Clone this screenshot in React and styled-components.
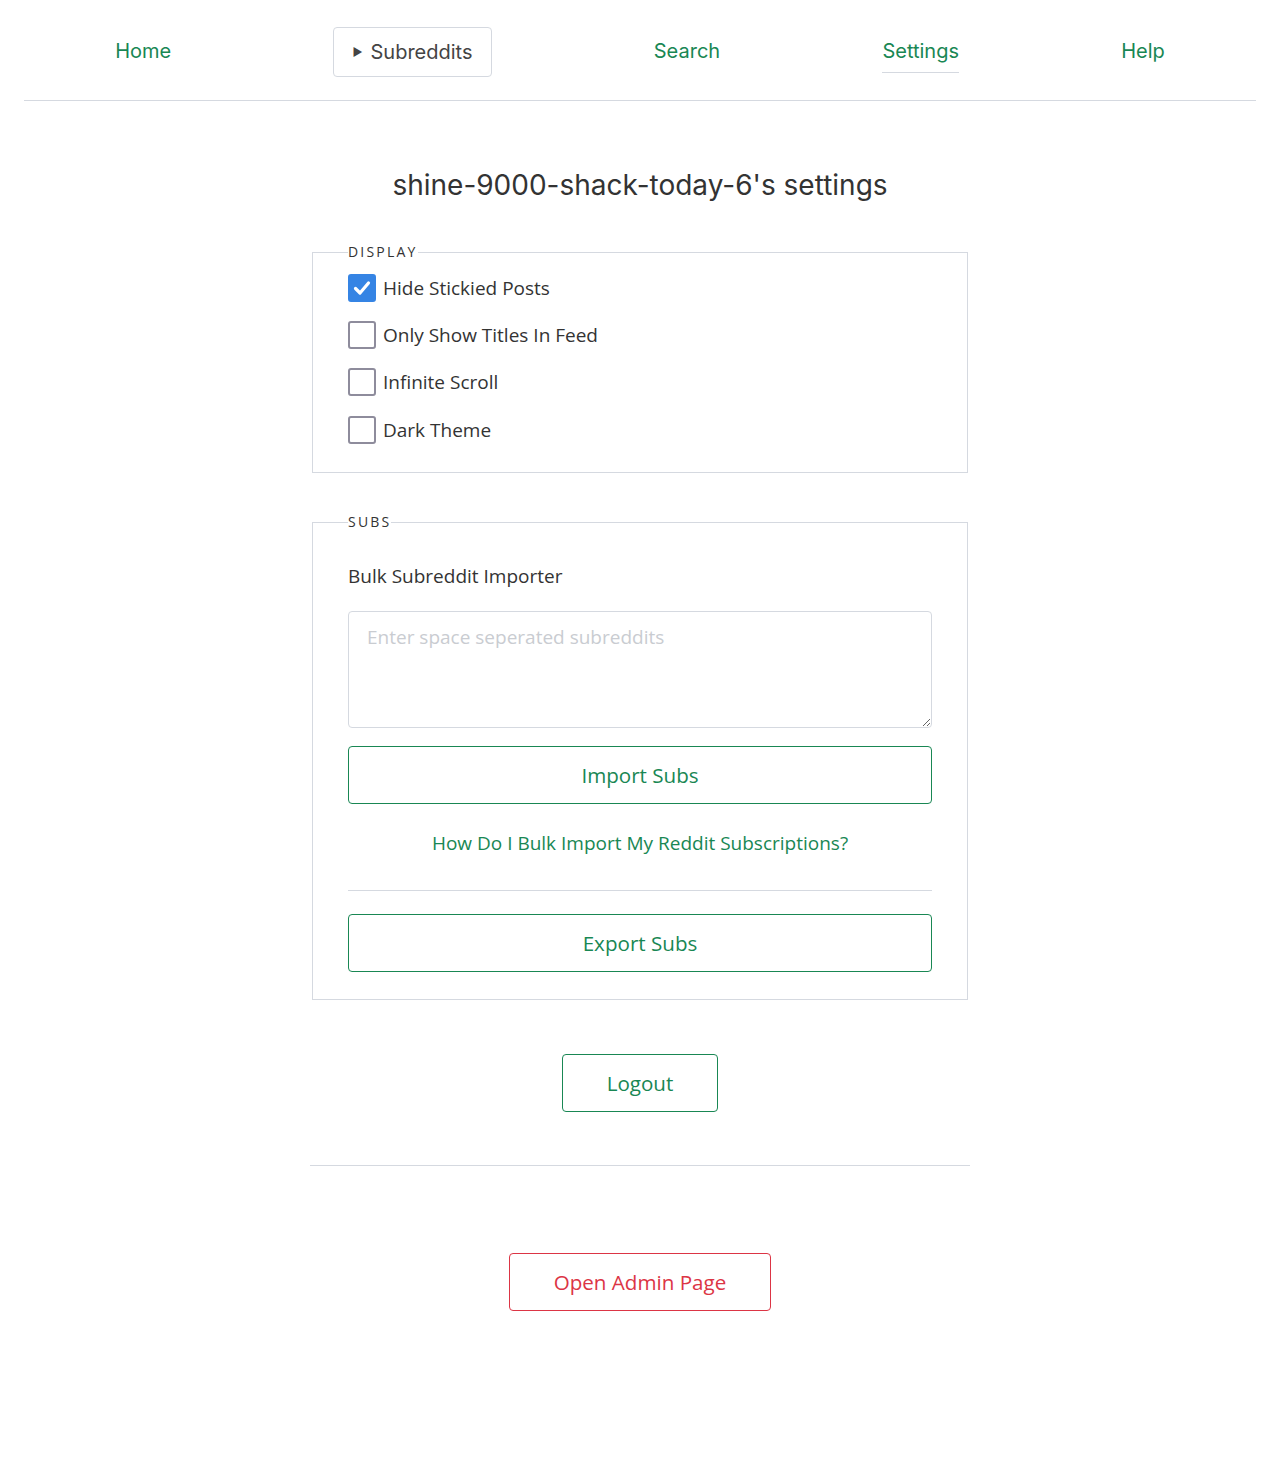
import React, { useState } from 'react'
import styled, { createGlobalStyle } from 'styled-components'

const GlobalStyle = createGlobalStyle`
  * { box-sizing: border-box; }
  html, body { margin: 0; padding: 0; background: #fff; }
  body {
    font-family: "Open Sans", "Liberation Sans", sans-serif;
    font-size: 19px;
    color: #373c44;
  }
`

const green = '#198754'
const red = '#dc3545'
const line = '#d5d9e0'

const Page = styled.div`
  padding: 0 24px 160px;
`

const Nav = styled.nav`
  display: flex;
  justify-content: space-around;
  align-items: center;
  height: 101px;
  padding: 0 10px;
  border-bottom: 1px solid ${line};
  font-family: "Inter", "Noto Sans", sans-serif;
  font-size: 20px;
`

const NavLink = styled.a`
  color: ${green};
  text-decoration: none;
  padding: 9px 0 8px;
  position: relative;
  &.active::after {
    content: "";
    position: absolute;
    left: 0;
    right: 0;
    bottom: -2px;
    height: 1px;
    background: ${line};
  }
`

const Dropdown = styled.button`
  display: flex;
  align-items: center;
  gap: 8px;
  font: inherit;
  color: #444;
  background: #fff;
  border: 1px solid ${line};
  border-radius: 4px;
  height: 50px;
  margin-top: 3px;
  padding: 0 18px;
  span { font-size: 11px; }
`

const Main = styled.main`
  width: 656px;
  margin: 0 auto;
  display: flex;
  flex-direction: column;
  align-items: stretch;
`

const Title = styled.h1`
  font-family: "Inter", "Noto Sans", sans-serif;
  font-weight: 400;
  font-size: 28px;
  color: #333;
  text-align: center;
  margin: 67px 0 43px;
`

const Fieldset = styled.fieldset`
  border: 1px solid ${line};
  margin: 0 0 ${(p) => p.$mb || '42px'};
  padding: ${(p) => p.$pad || '5px 35px 19px'};
  display: flex;
  flex-direction: column;
`

const Legend = styled.legend`
  font-size: 14px;
  letter-spacing: 2.2px;
  text-transform: uppercase;
  color: #333;
  padding: 0;
  line-height: 1;
`

const CheckRow = styled.label`
  display: flex;
  align-items: center;
  gap: 7px;
  height: 47.3px;
  cursor: pointer;
  color: #333;
`

const Box = styled.span`
  width: 28px;
  height: 28px;
  border-radius: 3px;
  border: 2px solid ${(p) => (p.$on ? '#3584e4' : '#8e8c9c')};
  background: ${(p) => (p.$on ? '#3584e4' : '#fff')};
  display: flex;
  align-items: center;
  justify-content: center;
`

const SubHead = styled.div`
  color: #333;
  margin: 24px 0 22px;
`

const TextArea = styled.textarea`
  width: 100%;
  height: 117px;
  margin-bottom: 18px;
  border: 1px solid ${line};
  border-radius: 4px;
  padding: 12px 18px;
  font: inherit;
  color: #333;
  resize: vertical;
  &::placeholder { color: #c9ccd1; }
`

const Button = styled.button`
  font-family: inherit;
  font-size: 20.6px;
  background: #fff;
  color: ${(p) => (p.$danger ? red : green)};
  border: 1px solid ${(p) => (p.$danger ? red : green)};
  border-radius: 4px;
  height: 58px;
  padding: 0 44px;
  width: ${(p) => (p.$block ? '100%' : 'auto')};
  align-self: center;
  cursor: pointer;
`

const HelpLink = styled.a`
  display: block;
  text-align: center;
  color: ${green};
  text-decoration: none;
  margin: 26px 0 34px;
`

const Rule = styled.hr`
  border: 0;
  border-top: 1px solid ${line};
  margin: ${(p) => p.$m || '0 0 23px'};
  width: ${(p) => p.$w || '100%'};
  align-self: center;
`

const options = [
  'Hide Stickied Posts',
  'Only Show Titles In Feed',
  'Infinite Scroll',
  'Dark Theme',
]

export default function App() {
  const [checked, setChecked] = useState({ 0: true })

  return (
    <Page>
      <GlobalStyle />
      <Nav>
        <NavLink href="#">Home</NavLink>
        <Dropdown>
          <span>▶</span>Subreddits
        </Dropdown>
        <NavLink href="#">Search</NavLink>
        <NavLink href="#" className="active">Settings</NavLink>
        <NavLink href="#">Help</NavLink>
      </Nav>
      <Main>
        <Title>shine-9000-shack-today-6's settings</Title>
        <Fieldset>
          <Legend>Display</Legend>
          {options.map((o, i) => (
            <CheckRow key={o} onClick={() => setChecked({ ...checked, [i]: !checked[i] })}>
              <Box $on={checked[i]}>
                {checked[i] && (
                  <svg width="20" height="20" viewBox="0 0 20 20">
                    <path d="M3.5 10.5 L8 15 L16.5 5" fill="none" stroke="#fff" strokeWidth="3.2" strokeLinecap="round" strokeLinejoin="round" />
                  </svg>
                )}
              </Box>
              {o}
            </CheckRow>
          ))}
        </Fieldset>
        <Fieldset $pad="10px 35px 27px" $mb="54px">
          <Legend>Subs</Legend>
          <SubHead>Bulk Subreddit Importer</SubHead>
          <TextArea placeholder="Enter space seperated subreddits" />
          <Button $block>Import Subs</Button>
          <HelpLink href="#">How Do I Bulk Import My Reddit Subscriptions?</HelpLink>
          <Rule />
          <Button $block>Export Subs</Button>
        </Fieldset>
        <Button>Logout</Button>
        <Rule $m="53px 0 87px" $w="660px" />
        <Button $danger>Open Admin Page</Button>
      </Main>
    </Page>
  )
}
